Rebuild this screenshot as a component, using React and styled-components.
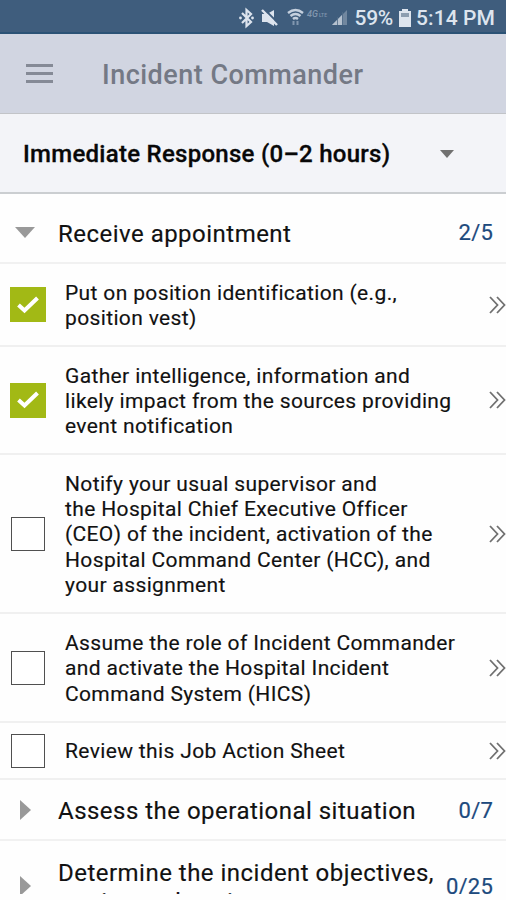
import React from 'react';
import styled, { createGlobalStyle } from 'styled-components';

const GlobalStyles = createGlobalStyle`
  * { box-sizing: border-box; }
  body {
    margin: 0;
    background: #fefefe;
    font-family: Roboto, "Liberation Sans", sans-serif;
    color: #111;
  }
`;

const Screen = styled.div`
  display: flex;
  flex-direction: column;
  width: 506px;
  height: 900px;
  overflow: hidden;
`;

const StatusBar = styled.div`
  display: flex;
  align-items: center;
  justify-content: flex-end;
  flex: none;
  height: 34px;
  padding: 3px 11px 0 0;
  background: #3f5d7d;
  border-bottom: 2px solid #2b5275;
  color: #dde4ee;
  font-size: 21px;
  font-weight: 500;
  white-space: nowrap;
`;

const StatusIcons = styled.svg`
  flex: none;
  margin-right: 5px;
`;

const BatteryIcon = styled.svg`
  flex: none;
  margin: 0 5px 0 6px;
`;

const StatusText = styled.span`
  letter-spacing: ${(props) => props.$spacing || 0}px;
`;

const AppBar = styled.header`
  display: flex;
  align-items: center;
  flex: none;
  height: 80px;
  padding: 2px 0 0 26px;
  background: #d1d5e1;
  border-bottom: 1px solid #c2c4c8;
`;

const MenuButton = styled.div`
  display: flex;
  flex-direction: column;
  gap: 5px;
  width: 27px;
  margin: 0 49px 3px 0;
`;

const MenuLine = styled.span`
  height: 3px;
  background: #858a96;
`;

const Title = styled.h1`
  margin: 0;
  font-size: 27px;
  font-weight: 500;
  letter-spacing: 0.48px;
  color: #747985;
`;

const PhaseSelect = styled.div`
  display: flex;
  align-items: center;
  justify-content: space-between;
  flex: none;
  height: 80px;
  padding: 2px 52px 0 23px;
  background: #f3f4f8;
  border-bottom: 2px solid #cbced1;
  font-size: 24px;
  font-weight: 500;
  letter-spacing: 0.27px;
  color: #080808;
  -webkit-text-stroke: 0.3px #080808;
`;

const List = styled.main`
  flex: none;
  height: 700px;
  overflow: hidden;
`;

const SectionRow = styled.div`
  display: flex;
  align-items: center;
  height: ${(props) => props.$height}px;
  padding: ${(props) => props.$offset || 0}px 13px 0 15px;
  border-bottom: 2px solid #f1f1f1;
`;

const ArrowBox = styled.div`
  display: flex;
  justify-content: center;
  flex: none;
  width: 20px;
  margin-right: 23px;
`;

const SectionName = styled.div`
  flex: 1;
  padding-top: 4px;
  font-size: 24px;
  line-height: 29px;
  letter-spacing: 0.48px;
  white-space: pre-line;
  -webkit-text-stroke: 0.15px #111;
`;

const Count = styled.div`
  padding-top: 1px;
  font-size: 22px;
  letter-spacing: 0.2px;
  color: #1d4a7d;
  -webkit-text-stroke: 0.2px #1d4a7d;
`;

const TaskRow = styled.div`
  display: flex;
  align-items: center;
  height: ${(props) => props.$height}px;
  padding-left: 10px;
  border-bottom: 2px solid #f0f0f0;
`;

const Checkbox = styled.div`
  display: flex;
  align-items: center;
  justify-content: center;
  flex: none;
  width: ${(props) => (props.$checked ? 36 : 34)}px;
  height: ${(props) => (props.$checked ? 35 : 34)}px;
  margin: ${(props) => (props.$checked ? '0 19px 0 0' : '0 20px 0 1px')};
  background: ${(props) => (props.$checked ? '#a2b915' : '#fff')};
  border: ${(props) => (props.$checked ? 'none' : '1.5px solid #505050')};
`;

const TaskText = styled.div`
  flex: 1;
  padding-top: 3px;
  font-size: 21px;
  line-height: 25.3px;
  letter-spacing: 0.36px;
  white-space: pre;
  -webkit-text-stroke: 0.15px #111;
`;

const More = styled.svg`
  flex: none;
  width: 17px;
  height: 18px;
`;

const BottomStrip = styled.div`
  flex: none;
  height: 6px;
  background: #fefefe;
`;

const tasks = [
    { text: 'Put on position identification (e.g.,\nposition vest)', checked: true, height: 83 },
    { text: 'Gather intelligence, information and\nlikely impact from the sources providing\nevent notification', checked: true, height: 108 },
    { text: 'Notify your usual supervisor and\nthe Hospital Chief Executive Officer\n(CEO) of the incident, activation of the\nHospital Command Center (HCC), and\nyour assignment', checked: false, height: 159 },
    { text: 'Assume the role of Incident Commander\nand activate the Hospital Incident\nCommand System (HICS)', checked: false, height: 109 },
    { text: 'Review this Job Action Sheet', checked: false, height: 57 },
];

function Arrow({ open }) {
    return (
        <ArrowBox>
            {open ? (
                <svg width="20" height="11" viewBox="0 0 20 11"><path d="M0 0H20L10 11Z" fill="#999" /></svg>
            ) : (
                <svg width="11" height="20" viewBox="0 0 11 20"><path d="M0 0L11 10L0 20Z" fill="#999" /></svg>
            )}
        </ArrowBox>
    );
}

function Section({ name, count, open, height, offset }) {
    return (
        <SectionRow $height={height} $offset={offset}>
            <Arrow open={open} />
            <SectionName>{name}</SectionName>
            <Count>{count}</Count>
        </SectionRow>
    );
}

function Task({ text, checked, height }) {
    return (
        <TaskRow $height={height}>
            <Checkbox $checked={checked}>
                {checked && (
                    <svg width="24" height="20" viewBox="0 0 24 20">
                        <path d="M2.5 10L8.5 15.5L21.5 3" fill="none" stroke="#fff" strokeWidth="4" />
                    </svg>
                )}
            </Checkbox>
            <TaskText>{text}</TaskText>
            <More viewBox="0 0 17 18">
                <path d="M1 1L8.5 9L1 17M8 1L15.5 9L8 17" fill="none" stroke="#707070" strokeWidth="1.8" />
            </More>
        </TaskRow>
    );
}

function App() {
    return (
        <Screen>
            <GlobalStyles />
            <StatusBar>
                <StatusIcons width="112" height="22" viewBox="0 0 112 22">
                    {/* bluetooth */}
                    <path d="M4 6L13 15L8.5 19V3L13 7L4 16" fill="none" stroke="#dde4ee" strokeWidth="2.2" />
                    <circle cx="2.5" cy="11" r="1.4" fill="#dde4ee" />
                    <circle cx="14.5" cy="11" r="1.4" fill="#dde4ee" />
                    {/* muted speaker */}
                    <path d="M24 7H29L36 3V19L29 15H24Z" fill="#dde4ee" />
                    <path d="M25 1L41 17" stroke="#3f5d7d" strokeWidth="2" />
                    <path d="M24 3L39 18" stroke="#dde4ee" strokeWidth="2.4" />
                    {/* wifi with traffic arrows */}
                    <path d="M50 6Q57.5 0 65 6M52.5 9Q57.5 5 62.5 9M55 12Q57.5 10 60 12" fill="none" stroke="#c5d0de" strokeWidth="2.4" />
                    <path d="M55.5 14V18M59.5 14V18" stroke="#8297af" strokeWidth="2" />
                    {/* signal */}
                    <path d="M94 18L109 3V18Z" fill="#71879f" />
                    <path d="M94 18L104 8V18Z" fill="#b5c1cf" />
                    <path d="M99.5 10V18M104.5 5V18" stroke="#4f6b88" strokeWidth="0.8" />
                    <text x="69" y="10" fontSize="9" fontStyle="italic" fill="#8297af">4G</text>
                    <text x="81" y="10" fontSize="5" fill="#8297af">LTE</text>
                </StatusIcons>
                <StatusText $spacing={-0.3}>59%</StatusText>
                <BatteryIcon width="12" height="18" viewBox="0 0 12 18">
                    <path d="M3 0H9V2H12V18H0V2H3Z" fill="#dde4ee" />
                    <path d="M2 4H10V8H2Z" fill="#8c9db0" />
                </BatteryIcon>
                <StatusText $spacing={0.1}>5:14 PM</StatusText>
            </StatusBar>
            <AppBar>
                <MenuButton>
                    <MenuLine />
                    <MenuLine />
                    <MenuLine />
                </MenuButton>
                <Title>Incident Commander</Title>
            </AppBar>
            <PhaseSelect>
                Immediate Response (0–2 hours)
                <svg width="14" height="8" viewBox="0 0 14 8"><path d="M0 0H14L7 8Z" fill="#717171" /></svg>
            </PhaseSelect>
            <List>
                <Section name="Receive appointment" count="2/5" open height={70} offset={8} />
                {tasks.map((task) => (
                    <Task key={task.text} {...task} />
                ))}
                <Section name="Assess the operational situation" count="0/7" height={61} />
                <Section name={'Determine the incident objectives,\ntactics and assignments'} count="0/25" height={92} />
            </List>
            <BottomStrip />
        </Screen>
    );
}

export default App;
